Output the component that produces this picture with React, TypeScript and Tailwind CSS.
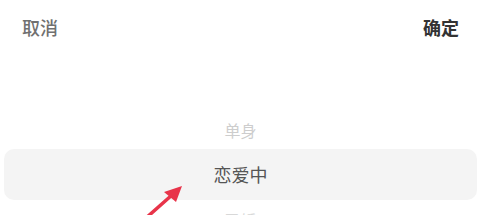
export default function App() {
  return (
    <div
      className="relative w-[481px] h-[215px] overflow-hidden bg-white"
      style={{ fontFamily: '"Noto Sans CJK SC", "Noto Sans", sans-serif' }}
    >
      <div className="flex items-center justify-between px-[22px] pt-[10px] h-[44px]">
        <span className="text-[18px] leading-[24px] font-medium text-[#707070]">取消</span>
        <span className="text-[18px] leading-[24px] font-bold text-[#333]">确定</span>
      </div>
      <div className="flex flex-col items-center pt-[74px]">
        <div className="h-[24px] flex items-center text-[16px] text-[#cdcdcd]">单身</div>
        <div className="mt-[7px] mx-[4px] self-stretch h-[51px] rounded-[10px] bg-[#f4f4f4] flex items-center justify-center text-[18px] text-[#555]">
          恋爱中
        </div>
        <div className="mt-[8px] h-[24px] flex items-center text-[16px] text-[#d8d8d8]">已婚</div>
      </div>
      <svg className="absolute left-0 top-0" width="481" height="215" viewBox="0 0 481 215">
        <line x1="146" y1="218" x2="172" y2="195" stroke="#e8344a" strokeWidth="3.5" strokeLinecap="round" />
        <polygon points="182,186 164,192 176,202" fill="#e8344a" />
      </svg>
    </div>
  );
}
